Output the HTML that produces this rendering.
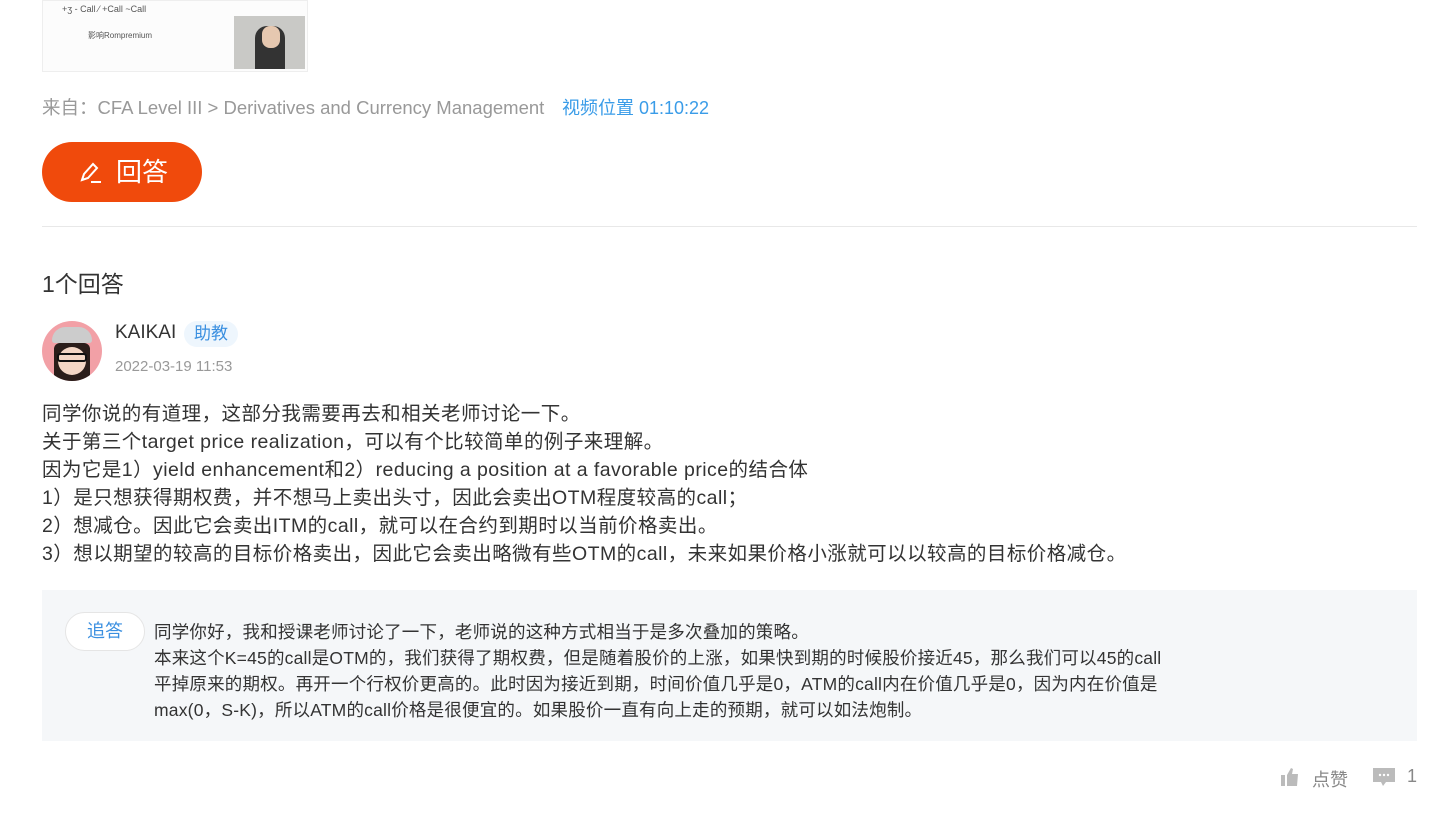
<!DOCTYPE html>
<html><head><meta charset="utf-8"><style>
*{margin:0;padding:0;box-sizing:border-box}
body{width:1449px;height:828px;background:#fff;font-family:"Liberation Sans","Noto Sans CJK SC",sans-serif;position:relative;overflow:hidden;color:#333}
.a{position:absolute;white-space:nowrap}
</style></head><body>
<div class="a" style="left:42px;top:0;width:266px;height:72px;background:#fcfcfc;border:1px solid #eee"></div>
<div class="a" style="left:62px;top:4px;font-size:9px;color:#555">+ʒ - Call ⁄ +Call ~Call</div>
<div class="a" style="left:88px;top:30px;font-size:8px;color:#555">影响Rompremium</div>
<div class="a" style="left:234px;top:16px;width:71px;height:53px;background:#c9c9c6"></div>
<div class="a" style="left:255px;top:26px;width:30px;height:43px;background:#333;border-radius:12px 12px 0 0"></div>
<div class="a" style="left:262px;top:26px;width:18px;height:22px;background:#e6c8b0;border-radius:8px"></div>
<div class="a" style="left:42px;top:94px;font-size:18.5px;color:#999">来自：CFA Level III &gt; Derivatives and Currency Management</div>
<div class="a" style="left:562px;top:94px;font-size:18px;color:#3a9ce8">视频位置 01:10:22</div>
<div class="a" style="left:42px;top:142px;width:160px;height:60px;background:#f04a0c;border-radius:30px;color:#fff;font-size:26px;line-height:60px;padding-left:74px">回答</div>
<svg class="a" style="left:78px;top:160px" width="26" height="26" viewBox="0 0 26 26" fill="none" stroke="#fff" stroke-width="2"><path d="M4 20 L6 14 L15 4 L19 8 L10 18 Z"/><path d="M13 22 H23"/></svg>
<div class="a" style="left:42px;top:226px;width:1375px;height:1px;background:#e8e8e8"></div>
<div class="a" style="left:42px;top:265px;font-size:23px;color:#333">1个回答</div>
<div class="a" style="left:42px;top:321px;width:60px;height:60px;border-radius:50%;background:#f2a0a6;overflow:hidden">
<div style="position:absolute;left:10px;top:6px;width:40px;height:16px;background:#ccc;border-radius:20px 20px 4px 4px"></div>
<div style="position:absolute;left:12px;top:22px;width:36px;height:40px;background:#2a1d1a;border-radius:6px"></div>
<div style="position:absolute;left:16px;top:26px;width:28px;height:28px;background:#f3d6c5;border-radius:50%"></div>
<div style="position:absolute;left:15px;top:32px;width:30px;height:9px;border:2px solid #111;border-radius:3px"></div></div>
<div class="a" style="left:115px;top:322px;font-size:19px;color:#333">KAIKAI</div>
<div class="a" style="left:184px;top:321px;width:54px;height:26px;background:#eef6fd;border-radius:13px;color:#3a8fe0;font-size:17px;line-height:26px;text-align:center">助教</div>
<div class="a" style="left:115px;top:358px;font-size:15px;color:#999">2022-03-19 11:53</div>
<div class="a" style="left:42px;top:400px;font-size:19.5px;letter-spacing:0.45px;line-height:28px;color:#333">同学你说的有道理，这部分我需要再去和相关老师讨论一下。<br>关于第三个target price realization，可以有个比较简单的例子来理解。<br>因为它是1）yield enhancement和2）reducing a position at a favorable price的结合体<br>1）是只想获得期权费，并不想马上卖出头寸，因此会卖出OTM程度较高的call；<br>2）想减仓。因此它会卖出ITM的call，就可以在合约到期时以当前价格卖出。<br>3）想以期望的较高的目标价格卖出，因此它会卖出略微有些OTM的call，未来如果价格小涨就可以以较高的目标价格减仓。</div>
<div class="a" style="left:42px;top:590px;width:1375px;height:151px;background:#f5f7f9"></div>
<div class="a" style="left:65px;top:612px;width:80px;height:39px;background:#fff;border:1px solid #e5e5e5;border-radius:20px;color:#3a8fe0;font-size:18px;line-height:37px;text-align:center">追答</div>
<div class="a" style="left:154px;top:619px;font-size:17.5px;letter-spacing:0.2px;line-height:26px;color:#333">同学你好，我和授课老师讨论了一下，老师说的这种方式相当于是多次叠加的策略。<br>本来这个K=45的call是OTM的，我们获得了期权费，但是随着股价的上涨，如果快到期的时候股价接近45，那么我们可以45的call<br>平掉原来的期权。再开一个行权价更高的。此时因为接近到期，时间价值几乎是0，ATM的call内在价值几乎是0，因为内在价值是<br>max(0，S-K)，所以ATM的call价格是很便宜的。如果股价一直有向上走的预期，就可以如法炮制。</div>
<svg class="a" style="left:1280px;top:767px" width="20" height="20" viewBox="0 0 20 20" fill="#bbb"><rect x="1" y="8" width="4" height="11"/><path d="M7 8 L11 1 L13 2 L12 7 H18 L17 19 H7 Z"/></svg>
<div class="a" style="left:1312px;top:766px;font-size:18px;color:#888">点赞</div>
<svg class="a" style="left:1372px;top:766px" width="24" height="22" viewBox="0 0 24 22" fill="#bbb"><path d="M1 2 H23 V16 H14 L11 20 L9 16 H1 Z"/><circle cx="8" cy="9" r="1.2" fill="#fff"/><circle cx="12" cy="9" r="1.2" fill="#fff"/><circle cx="16" cy="9" r="1.2" fill="#fff"/></svg>
<div class="a" style="left:1407px;top:766px;font-size:18px;color:#888">1</div>
</body></html>
